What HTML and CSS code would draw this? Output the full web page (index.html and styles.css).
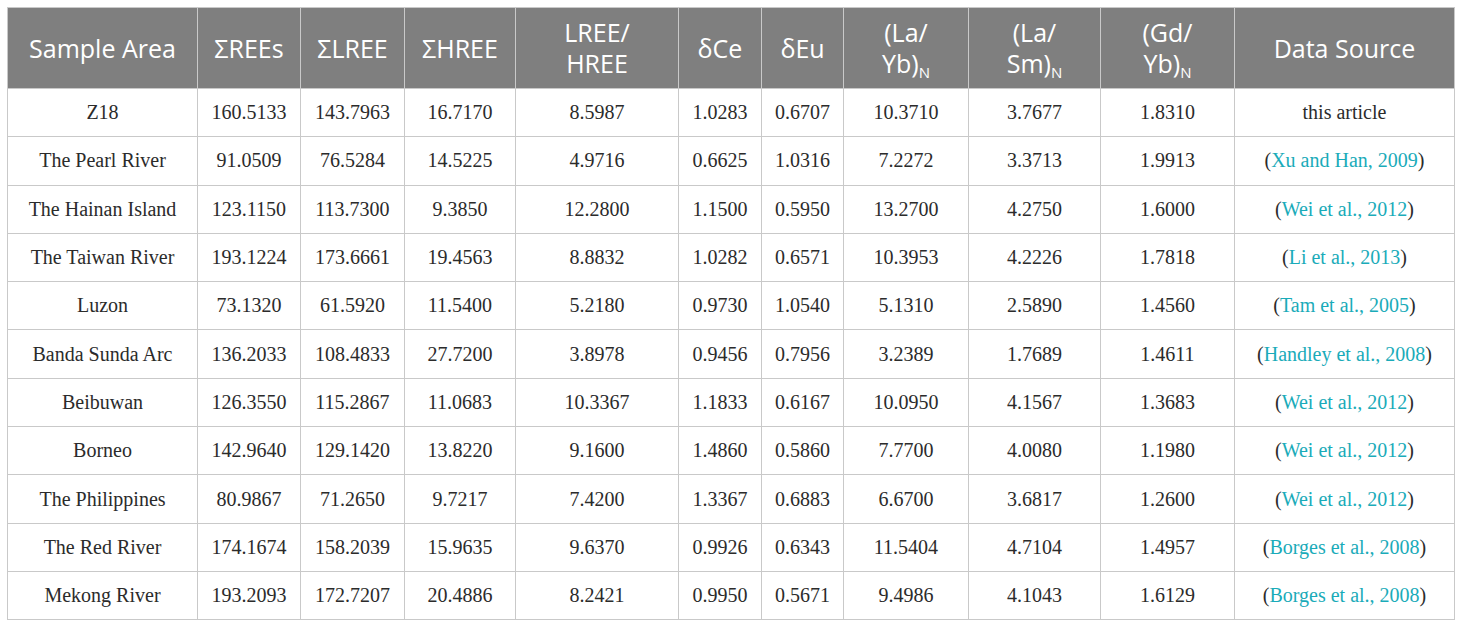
FILE: index.html
```html
<!DOCTYPE html>
<html>
<head>
<meta charset="utf-8">
<link rel="stylesheet" href="styles.css">
</head>
<body>
<table class="ree">
<colgroup>
<col class="c1"><col class="c2"><col class="c3"><col class="c4"><col class="c5"><col class="c6"><col class="c7"><col class="c8"><col class="c9"><col class="c10"><col class="c11">
</colgroup>
<thead>
<tr>
<th>Sample Area</th><th>ΣREEs</th><th>ΣLREE</th><th>ΣHREE</th><th>LREE/<br>HREE</th><th>δCe</th><th>δEu</th><th>(La/<br>Yb)<sub>N</sub></th><th>(La/<br>Sm)<sub>N</sub></th><th>(Gd/<br>Yb)<sub>N</sub></th><th>Data Source</th>
</tr>
</thead>
<tbody>
<tr><td>Z18</td><td>160.5133</td><td>143.7963</td><td>16.7170</td><td>8.5987</td><td>1.0283</td><td>0.6707</td><td>10.3710</td><td>3.7677</td><td>1.8310</td><td>this article</td></tr>
<tr><td>The Pearl River</td><td>91.0509</td><td>76.5284</td><td>14.5225</td><td>4.9716</td><td>0.6625</td><td>1.0316</td><td>7.2272</td><td>3.3713</td><td>1.9913</td><td>(<a>Xu and Han, 2009</a>)</td></tr>
<tr><td>The Hainan Island</td><td>123.1150</td><td>113.7300</td><td>9.3850</td><td>12.2800</td><td>1.1500</td><td>0.5950</td><td>13.2700</td><td>4.2750</td><td>1.6000</td><td>(<a>Wei et al., 2012</a>)</td></tr>
<tr><td>The Taiwan River</td><td>193.1224</td><td>173.6661</td><td>19.4563</td><td>8.8832</td><td>1.0282</td><td>0.6571</td><td>10.3953</td><td>4.2226</td><td>1.7818</td><td>(<a>Li et al., 2013</a>)</td></tr>
<tr><td>Luzon</td><td>73.1320</td><td>61.5920</td><td>11.5400</td><td>5.2180</td><td>0.9730</td><td>1.0540</td><td>5.1310</td><td>2.5890</td><td>1.4560</td><td>(<a>Tam et al., 2005</a>)</td></tr>
<tr><td>Banda Sunda Arc</td><td>136.2033</td><td>108.4833</td><td>27.7200</td><td>3.8978</td><td>0.9456</td><td>0.7956</td><td>3.2389</td><td>1.7689</td><td>1.4611</td><td>(<a>Handley et al., 2008</a>)</td></tr>
<tr><td>Beibuwan</td><td>126.3550</td><td>115.2867</td><td>11.0683</td><td>10.3367</td><td>1.1833</td><td>0.6167</td><td>10.0950</td><td>4.1567</td><td>1.3683</td><td>(<a>Wei et al., 2012</a>)</td></tr>
<tr><td>Borneo</td><td>142.9640</td><td>129.1420</td><td>13.8220</td><td>9.1600</td><td>1.4860</td><td>0.5860</td><td>7.7700</td><td>4.0080</td><td>1.1980</td><td>(<a>Wei et al., 2012</a>)</td></tr>
<tr><td>The Philippines</td><td>80.9867</td><td>71.2650</td><td>9.7217</td><td>7.4200</td><td>1.3367</td><td>0.6883</td><td>6.6700</td><td>3.6817</td><td>1.2600</td><td>(<a>Wei et al., 2012</a>)</td></tr>
<tr><td>The Red River</td><td>174.1674</td><td>158.2039</td><td>15.9635</td><td>9.6370</td><td>0.9926</td><td>0.6343</td><td>11.5404</td><td>4.7104</td><td>1.4957</td><td>(<a>Borges et al., 2008</a>)</td></tr>
<tr><td>Mekong River</td><td>193.2093</td><td>172.7207</td><td>20.4886</td><td>8.2421</td><td>0.9950</td><td>0.5671</td><td>9.4986</td><td>4.1043</td><td>1.6129</td><td>(<a>Borges et al., 2008</a>)</td></tr>
</tbody>
</table>
</body>
</html>
```

FILE: styles.css
```css
html, body {
  margin: 0;
  background: #ffffff;
}
body {
  padding: 7px;
}
.ree {
  border-collapse: collapse;
  table-layout: fixed;
  width: 1447px;
}
.ree th, .ree td {
  border: 1px solid #c9c9c9;
  text-align: center;
  padding: 0 2px;
}
.ree th {
  background: #7f7f7f;
  color: #ffffff;
  font-family: "Open Sans", "Noto Sans", sans-serif;
  font-weight: 400;
  font-size: 25px;
  line-height: 31px;
  height: 80px;
}
.ree th sub {
  font-size: 15px;
  vertical-align: -5px;
  line-height: 0;
}
.ree td {
  font-family: "Liberation Serif", "DejaVu Serif", serif;
  font-size: 20px;
  color: #2b2b2b;
  height: 47.3px;
}
.ree a {
  color: #1aabb9;
}
.c1 { width: 190px; }
.c2 { width: 103px; }
.c3 { width: 104px; }
.c4 { width: 111px; }
.c5 { width: 163px; }
.c6 { width: 83px; }
.c7 { width: 82px; }
.c8 { width: 125px; }
.c9 { width: 132px; }
.c10 { width: 134px; }
.c11 { width: 220px; }
```
